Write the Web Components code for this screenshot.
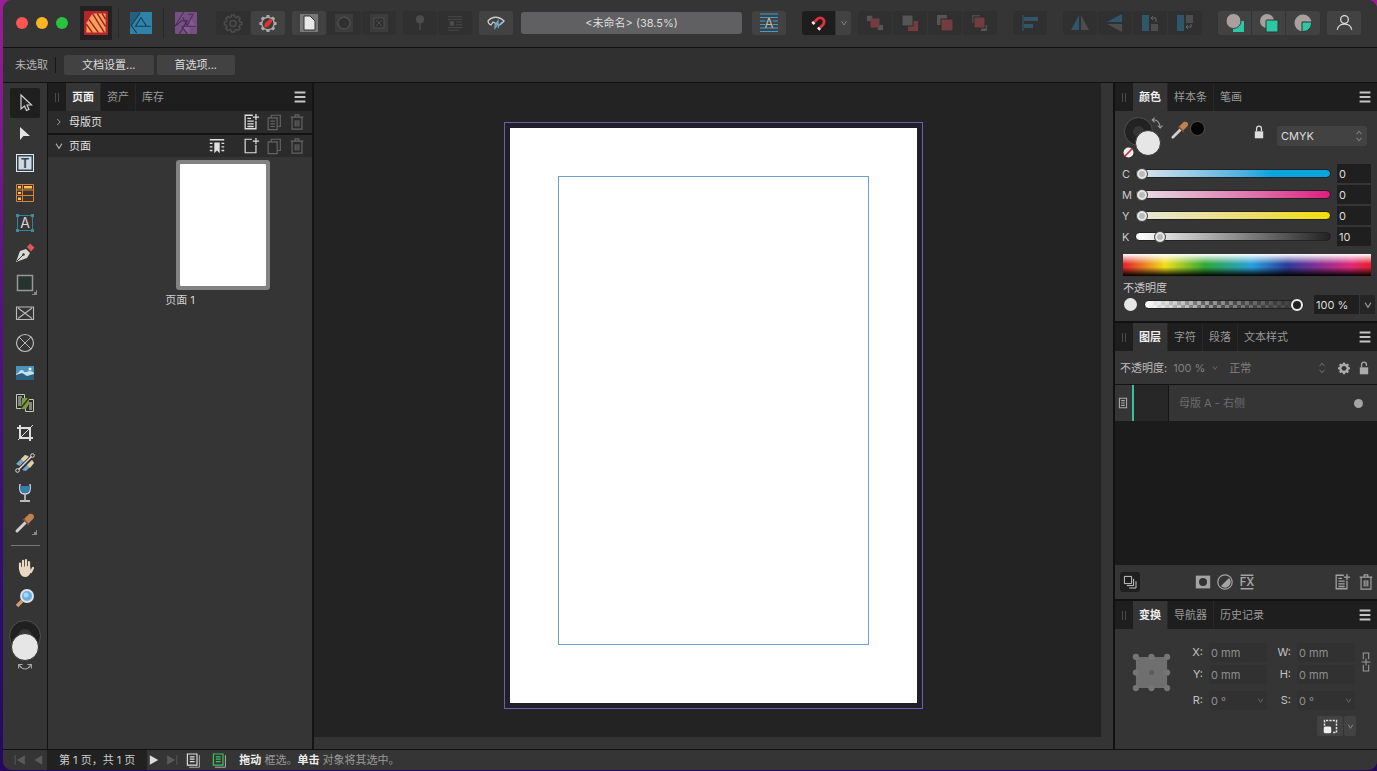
<!DOCTYPE html>
<html lang="zh-CN">
<head>
<meta charset="utf-8">
<title>未命名</title>
<style>
  html, body {
    height: 100%;
    margin: 0;
  }
  body {
    display: flex;
    box-sizing: border-box;
    padding: 0 0 1px 3px;
    overflow: hidden;
    background: linear-gradient(#9a1f96, #5c1384 35%, #2b0d6e 80%, #26095c);
    color: #c8c8c8;
    font: 11px/16px Inter, "Noto Sans CJK SC", sans-serif;
  }
</style>
</head>
<body>
<app-window>
  <tool-bar></tool-bar>
  <context-bar></context-bar>
  <main-area>
    <tool-strip></tool-strip>
    <pages-panel></pages-panel>
    <page-canvas></page-canvas>
    <side-panels>
      <color-panel></color-panel>
      <layers-panel></layers-panel>
      <transform-panel></transform-panel>
    </side-panels>
  </main-area>
  <status-bar></status-bar>
</app-window>

<script>
// all icons are drawn on a 20x20 grid
const GEAR = '<path d="M8.6 2h2.8l.4 2 1.5.6 1.8-1.1 2 2-1.1 1.7.6 1.5 2 .5v2.6l-2 .5-.6 1.5 1.1 1.7-2 2-1.8-1.1-1.5.6-.4 2H8.6l-.4-2-1.5-.6-1.8 1.1-2-2L4 13.8l-.6-1.5-2-.5V9.2l2-.5L4 7.2 2.9 5.5l2-2 1.8 1.1L8.2 4z"';
const LINES = '<path d="M1 2h18M1 4h18M1 6h18M1 8h18M1 10h18M1 12h18M1 14h18M1 16h18M1 18h18" stroke="currentColor" stroke-width=".9"/>';

const ICONS = {
  publisher: '<rect width="20" height="20" rx="1" fill="#b4242a"/><path d="M7 2h11v16H2v-8z" fill="#ff9c5c"/><path d="M7 2l10 16M4 7l8 11M2 11l5 7M11 2l7 11M15 2l3 5" stroke="#8a2b22" stroke-width="1.2"/>',
  designer: '<rect width="20" height="20" rx="1" fill="#2b7295"/><path d="M10 0 0 16v4h20V0z" fill="#3083a8"/><path d="M9 1 1 12l5 7M10 5 5 13h14M10 5l5 8M5 13h14" stroke="#163c50" fill="none"/><path d="M0 0h9L0 13z" fill="#27607e"/>',
  photo: '<rect width="20" height="20" rx="1" fill="#755083"/><path d="M7 0 0 12v3l9-15zM14 5l5 8H6l7 7" fill="#835b91"/><path d="M0 13 8 0M7 5l4 7 5-9M4 20l7-12h-5l-6 5M7 13h12M6 13l5 7M12 2h5" stroke="#472c53" fill="none"/>',
  gear: GEAR + ' fill="none" stroke="currentColor" stroke-width="1.5"/><circle cx="10" cy="10.5" r="3" fill="none" stroke="currentColor" stroke-width="1.5"/>',
  gearRed: GEAR + ' fill="#aaa"/><circle cx="10" cy="10.5" r="5.5" fill="#3a3a3a"/><path d="M6 14.5 7 10l5-4 2.5.5-.5 2.500-4 5z" fill="#d33"/>',
  wrapPage: LINES + '<path d="M5 3h6l5 5v9H5z" fill="#e8e8e8" stroke="#333"/>',
  wrapCircle: LINES + '<circle cx="10" cy="10" r="6" fill="#303030" stroke="currentColor" stroke-width="1.5"/>',
  wrapBox: LINES + '<rect x="5" y="5" width="10" height="10" fill="#303030" stroke="currentColor"/><path d="M7 7l6 6M13 7l-6 6" stroke="currentColor"/>',
  pin: '<circle cx="10" cy="6" r="4.5" fill="currentColor"/><path d="M10 9v9" stroke="currentColor" stroke-width="1.5"/>',
  inline: '<path d="M2 3h16M2 6h16M11 9h7M11 12h7M2 15h16M2 18h12" stroke="currentColor"/><rect x="4" y="8" width="5" height="5" fill="currentColor"/>',
  preview: '<path d="M5 12C3 11 2 9 2 8c4-5 11-5 16 0-2 2-3 4-5 4L7 9z" fill="none" stroke="#ccc" stroke-width="1.3"/><path d="M9 15v-3l3-4v3zM12 15l1-3 3-3" stroke="#6da6c4" fill="none" stroke-width="1.3"/>',
  baseline: '<path d="M1 1h18M1 4.500h18M1 8h18M1 11.5h18M1 15h18M1 18.5h18" stroke="#3c9fd0" stroke-width="1.2"/><path d="M6 5h8v9H6z" fill="#424242" opacity=".7"/><text x="10" y="15" font-size="13" text-anchor="middle" fill="#bbb">A</text>',
  magnet: '<g transform="rotate(45 10 10)"><path d="M5 15V8a5 5 0 0 1 10 0v7" fill="none" stroke="#e0303a" stroke-width="3.5"/><path d="M3 15h4M13 15h4" stroke="#eee" stroke-width="3"/></g>',
  toBack: '<rect x="1" y="2" width="6" height="6" fill="#555"/><rect x="13" y="12" width="6" height="6" fill="#555"/><rect x="5" y="5" width="10" height="10" fill="#733c3e"/>',
  back: '<rect x="8" y="8" width="10" height="10" fill="#733c3e"/><rect x="2" y="2" width="11" height="11" fill="#555" stroke="#2d2d2d"/>',
  forward: '<rect x="2" y="2" width="10" height="10" fill="#555"/><rect x="6" y="6" width="12" height="12" fill="#733c3e" stroke="#2d2d2d"/>',
  toFront: '<rect x="2" y="2" width="8" height="8" fill="#4a4a4a"/><rect x="11" y="12" width="6" height="6" fill="#555"/><rect x="4" y="4" width="11" height="11" fill="#733c3e" stroke="#2d2d2d"/>',
  align: '<path d="M3 2v16" stroke="#3a5a6c"/><path d="M4 4h14v4H4zM4 11h9v4H4z" fill="#30566c"/>',
  flipH: '<path d="M9 2v15H1z" fill="#30566c"/><path d="M11 2v15h8z" fill="#4d4d4d"/>',
  flipV: '<path d="M17 1v8H2z" fill="#30566c"/><path d="M17 19v-8H2z" fill="#4d4d4d"/>',
  rotL: '<path d="M2 2h7v16H2z" fill="#30566c"/><path d="M11 11h7v7h-7z" fill="#4d4d4d"/><path d="M11 5h5v4M13 3l-2 2 2 2" fill="none" stroke="#666"/>',
  rotR: '<path d="M2 2h7v16H2z" fill="#30566c"/><path d="M11 2h7v8h-7z" fill="#4d4d4d"/><path d="M11 14h5v-3M13 12l-2 2 2 2" fill="none" stroke="#666"/>',
  insBehind: '<path d="M8 8h11v11H8z" fill="#2cc8a4"/><circle cx="8.5" cy="8" r="7.5" fill="#a9a0a0" stroke="#424242"/>',
  insTop: '<circle cx="8" cy="8" r="7" fill="#a9a0a0"/><rect x="7" y="7" width="12" height="12" rx="1" fill="#2cc8a4" stroke="#333"/>',
  insIn: '<circle cx="10" cy="10" r="8.5" fill="#a9a0a0"/><path d="M9 9h9.500a8.500 8.500 0 0 1-9.500 9.500z" fill="#2cc8a4" stroke="#333"/>',
  account: '<circle cx="10" cy="6.5" r="4.5" fill="none" stroke="#ddd" stroke-width="1.5"/><path d="M1.500 18.500c1-9 16-9 17 0" fill="none" stroke="#ddd" stroke-width="1.5"/>',

  move: '<path d="M6 2v14l3.500-3 2 4.500 2.500-1-2-4.500h4.500z" fill="#222" stroke="#ccc" stroke-width="1.2"/>',
  node: '<path d="M5 4v13l3.500-4H15z" fill="#e4e4e4"/>',
  frameText: '<rect x="1.5" y="1.5" width="17" height="17" fill="#33424c" stroke="#dfe8ec"/><rect x="3.5" y="3.5" width="13" height="13" fill="#cfdbe1"/><text x="10" y="15" font-size="13" font-weight="600" text-anchor="middle" fill="#37444d">T</text>',
  table: '<path d="M1.500 1.500h17v17h-17zM7.500 2v16M2 7h16M2 12.500h16" fill="none" stroke="#e8802a"/><path d="M3 3h3v2.500H3zM9 3h8v2.500H9zM3 9h3v2H3zM3 14.500h3V17H3z" fill="#ffc24c"/>',
  artText: '<rect x="2.5" y="2.5" width="15" height="15" fill="none" stroke="#3c8296"/><path d="M1 1h3v3H1zM16 1h3v3h-3zM1 16h3v3H1zM16 16h3v3h-3z" fill="#3f8ca2"/><text x="10" y="15" font-size="14" text-anchor="middle" fill="#d6d6d6">A</text>',
  pen: '<path d="M1 19 5 8l6-2 4 4-3 5z" fill="#d9dad4"/><path d="M2 18l6-6" stroke="#333"/><circle cx="8.500" cy="11.500" r="1.200" fill="#333"/><path d="M12 4l3-3.500 4.500 4L16 8.500z" fill="#e25557"/>',
  rect: '<rect x="2.5" y="2.5" width="15" height="15" fill="#26332f" stroke="#989898" stroke-width="1.5"/>',
  pictRect: '<path d="M1.500 4h17v12.500h-17zM3 5l14 10.500M17 5 3 15.500" fill="none" stroke="#bbb" stroke-width="1.1"/>',
  pictOval: '<circle cx="10" cy="10" r="8.5" fill="none" stroke="#bbb" stroke-width="1.2"/><path d="M4 4l12 12M16 4 4 16" stroke="#bbb"/>',
  image: '<path d="M1 3h18v14H1z" fill="#4b93bd"/><path d="M1 12c0-2 2-1 3-3s4-3 5 0h3c2-2 5-1 7 1v3H1z" fill="#c5e1ec"/><path d="M1 12l6-2 5 3 7-2v6H1z" fill="#2c5e82"/><circle cx="15" cy="6" r="1.500" fill="#e8f4fa"/>',
  merge: '<path d="M1.500 1.500h8v14h-8zM10.500 6.500h8v12h-8z" fill="#2b2b2b" stroke="#c4ccb4"/><path d="M3 4h4M3 6h3M3 8h3M3 10h3M3 12h3M13 10h4M14 12h3M14 14h3M14 16h3" stroke="#ddd"/><path d="M7 5h7v6l-3 5H6z" fill="#7c9a44"/><path d="M6 15l8-10" stroke="#2c3a18" stroke-width="1.500"/>',
  crop: '<path d="M5 2v13h13M2 5h13v13" fill="none" stroke="#ddd" stroke-width="2"/><path d="M3 17 18 2" stroke="#ddd"/>',
  gradient: '<path d="M1 11 10 2l4 1L5 13z" fill="#79a7c5"/><path d="M6 6l4-4 4 2-5 5z" fill="#e6ce9c"/><path d="M7 17 17 7l2 3-8 8z" fill="#79a7c5"/><path d="M12 12l5-5 2 3-4 5z" fill="#e6ce9c"/><path d="M3 17 17 3" stroke="#333" stroke-width="3"/><path d="M3 17 17 3" stroke="#ddd" stroke-width="1.500"/><circle cx="2.500" cy="17.500" r="1.800" fill="#333" stroke="#ddd"/><circle cx="17.500" cy="2.500" r="1.800" fill="#333" stroke="#ddd"/>',
  glass: '<path d="M5 1c-1 6 0 10 5 10s6-4 5-10M10 11v6" fill="none" stroke="#c6d2d8" stroke-width="1.500"/><path d="M5 3h10c0 6-2 7-5 7S5 9 5 3z" fill="#357fab"/><path d="M5 18h10" stroke="#ccc" stroke-width="1.800"/>',
  picker: '<path d="M2 18 12 8" stroke="#d0d0d0" stroke-width="3" stroke-linecap="round"/><path d="M9 6l5-5c5-1 6 3 4 5l-5 5z" fill="#c28150"/><path d="M8 6l6 6" stroke="#7b5136" stroke-width="1.500"/>',
  hand: '<path d="M5 11V5.500M8 10V2.800M11 10V2M14 10V4M16 14l2-4" stroke="#ead8c2" stroke-width="2.200" stroke-linecap="round"/><path d="M4 9l11-1 1 5c-1 4-3 6-6 6s-6-3-6-10z" fill="#ead8c2"/>',
  zoom: '<path d="M2 18l5-5" stroke="#d59a6c" stroke-width="3.500"/><circle cx="12" cy="8" r="6" fill="#6aaee6" stroke="#e3e3e3" stroke-width="2"/><circle cx="11" cy="7" r="2.500" fill="#a9d6f5"/>',

  burger: '<path d="M4 5h12M4 10h12M4 15h12" stroke="#c4c4c4" stroke-width="2"/>',
  right: '<path d="M7 5l5 5-5 5" fill="none" stroke="currentColor" stroke-width="1.500"/>',
  down: '<path d="M5 6l5 8 5-8" fill="none" stroke="currentColor" stroke-width="1.800"/>',
  updown: '<path d="M6 7l4-5 4 5M6 13l4 5 4-5" fill="none" stroke="currentColor" stroke-width="1.500"/>',
  addMaster: '<path d="M12 2.500H3.500v15h12V9M15.500 1v7M12 4.500h7M6 9h7M6 12h7M6 15h7M6 6h4" fill="none" stroke="currentColor" stroke-width="1.400"/>',
  addPage: '<path d="M11 2.500H3.500v15h12V9M15.500 1v7M12 4.500h7" fill="none" stroke="currentColor" stroke-width="1.300"/>',
  copyLines: '<path d="M3.500 5.500h10v13h-10zM7 5V2.500h10V15h-3M6 9h5M6 12h5M6 15h5" fill="none" stroke="currentColor" stroke-width="1.300"/>',
  copy: '<path d="M3.500 5.500h10v13h-10zM7 5V2.500h10V15h-3" fill="none" stroke="currentColor" stroke-width="1.300"/>',
  trash: '<path d="M3 4.500h14M8 4V2h4v2M4.500 5v13h11V5M8 8v7M10 8v7M12 8v7" fill="none" stroke="currentColor" stroke-width="1.300"/>',
  section: '<path d="M2 3h16M2 7h3M15 7h3M2 11h3M15 11h3M2 15h3M15 15h3" stroke="currentColor" stroke-width="1.500"/><path d="M7 6h6v12l-3-3-3 3z" fill="currentColor"/>',
  swap: '<path d="M4 5c6-1 9 3 10 9M7 2 4 5l3 3M11 12l3 3 3-3" fill="none" stroke="currentColor" stroke-width="1.300"/>',
  swapFlat: '<path d="M3 8c4 6 10 6 14 0M2 12V7h5M18 12V7h-5" fill="none" stroke="currentColor" stroke-width="1.300"/>',
  none: '<circle cx="10" cy="10" r="9" fill="#eee"/><path d="M3 17 17 3" stroke="#cc3545" stroke-width="3"/>',
  lock: '<path d="M4 9h12v10H4z" fill="currentColor"/><path d="M6.500 9V5a3.500 3.500 0 0 1 7 0v4" fill="none" stroke="currentColor" stroke-width="1.800"/>',
  unlock: '<path d="M4 9h12v10H4z" fill="currentColor"/><path d="M6.500 9V5a3.500 3.500 0 0 1 7 0v2" fill="none" stroke="currentColor" stroke-width="1.800"/>',
  cog: GEAR + ' fill="currentColor"/><circle cx="10" cy="10.5" r="3.5" fill="#333"/>',
  sheet: '<path d="M4 2h12v16H4zM7 6h6M7 10h6M7 14h6" fill="none" stroke="currentColor" stroke-width="1.800"/>',
  stack: '<path d="M3 3h9v9H3zM14.500 6v8.500H6M17.500 9v8.500H9" fill="none" stroke="currentColor" stroke-width="1.200"/>',
  mask: '<path d="M1 2h18v16H1z" fill="currentColor"/><circle cx="10" cy="10" r="5" fill="#333"/>',
  adjust: '<circle cx="10" cy="10" r="9" fill="none" stroke="currentColor" stroke-width="1.500"/><path d="M15 5A7 7 0 0 1 5 15z" fill="currentColor"/>',
  fx: '<path d="M2 1.500h16M2 18.500h16" stroke="currentColor" stroke-width="1.800"/><text x="10" y="15" font-size="14" font-weight="600" text-anchor="middle" fill="currentColor">FX</text>',
  link: '<path d="M7 7V0h6v7M7 13v7h6v-7M10 6v8M5 10h10" fill="none" stroke="currentColor" stroke-width="1.200"/>',
  anchors: '<path d="M2 2h16v16H2z" fill="#6f6f6f"/><g fill="#757575"><circle cx="2" cy="2" r="1.600"/><circle cx="10" cy="2" r="1.600"/><circle cx="18" cy="2" r="1.600"/><circle cx="2" cy="10" r="1.600"/><circle cx="18" cy="10" r="1.600"/><circle cx="2" cy="18" r="1.600"/><circle cx="10" cy="18" r="1.600"/><circle cx="18" cy="18" r="1.600"/></g><circle cx="10" cy="10" r="1.300" fill="#5c5c5c"/>',
  bounds: '<path d="M2 9V2h16v16h-6" fill="none" stroke="#ddd" stroke-width="2" stroke-dasharray="3 1.500"/><rect x="1" y="10" width="10" height="9" rx="2" fill="#eee"/>',
  first: '<path d="M2 2v16" stroke="currentColor" stroke-width="1.500"/><path d="M18 2v16L5 10z" fill="currentColor"/>',
  prev: '<path d="M17 2v16L4 10z" fill="currentColor"/>',
  next: '<path d="M3 2v16l14-8z" fill="currentColor"/>',
  last: '<path d="M18 2v16" stroke="currentColor" stroke-width="1.500"/><path d="M2 2v16l13-8z" fill="currentColor"/>',
  sheets: '<path d="M3 2.500h12v14H3zM6 6h6M6 9h6M6 12h6" fill="none" stroke="currentColor" stroke-width="1.500"/><path d="M5 19h13V4" fill="none" stroke="#ccc"/>',
};

// rules that every shadow root starts with
const BASE = `
  :host { display: block; box-sizing: border-box; }
  *, ::before, ::after { box-sizing: border-box; }
  button, input, select {
    margin: 0; padding: 0; border: 0; background: none;
    color: inherit; font: inherit; outline: 0;
    appearance: none; border-radius: 0;
  }
  button { display: flex; align-items: center; justify-content: center; }
`;

function define(name, markup) {
  customElements.define(name, class extends HTMLElement {
    constructor() {
      super();
      let template = document.createElement('template');
      template.innerHTML = markup.replace('<style>', '<style>' + BASE);
      this.attachShadow({mode: 'open'}).appendChild(template.content.cloneNode(true));
    }
  });
}

class AppIcon extends HTMLElement {
  constructor() {
    super();
    this.attachShadow({mode: 'open'});
  }

  connectedCallback() {
    let size = this.getAttribute('size') || 20;
    this.shadowRoot.innerHTML = `
      <style>
        :host { display: block; flex: none; width: ${size}px; height: ${size}px; }
        svg { display: block; overflow: visible; font-family: Inter, sans-serif; }
      </style>
      <svg width="${size}" height="${size}" viewBox="0 0 20 20" aria-hidden="true">${ICONS[this.getAttribute('name')]}</svg>`;
  }
}
customElements.define('app-icon', AppIcon);

// row of tabs on top of a panel, names separated by commas, first one is active
class PanelTabs extends HTMLElement {
  constructor() {
    super();
    this.attachShadow({mode: 'open'});
  }

  connectedCallback() {
    let tabs = this.getAttribute('names').split(',')
      .map((n, i) => `<button role="tab" aria-selected="${i === 0}">${n}</button>`)
      .join('');
    this.shadowRoot.innerHTML = `
      <style>
        ${BASE}
        :host { display: flex; flex: none; height: 28px; background: #1e1e1e; padding-right: 3px; }
        .grip { width: 4px; height: 9px; margin: 10px 7px 0; border: solid #4a4a4a; border-width: 0 1px; }
        .tabs { display: flex; flex: 1; }
        .tabs button { padding: 0 6px; border-right: 1px solid #282828; color: #999; }
        .tabs button:last-child { border: 0; }
        .tabs [aria-selected=true] { background: #353535; color: #eee; font-weight: 600; }
      </style>
      <span class="grip"></span>
      <div class="tabs" role="tablist">${tabs}</div>
      <button aria-label="菜单"><app-icon name="burger" size="18"></app-icon></button>`;
  }
}
customElements.define('panel-tabs', PanelTabs);

define('app-window', `
  <style>
    :host {
      display: flex; flex-direction: column; flex: 1; min-width: 0;
      background: #333; border-radius: 9px; overflow: hidden;
    }
  </style>
  <slot></slot>
`);

define('main-area', `
  <style>
    :host { display: flex; flex: 1; min-height: 0; }
  </style>
  <slot></slot>
`);

define('tool-bar', `
  <style>
    :host {
      display: flex; align-items: center; height: 48px; padding: 0 16px 2px 13px;
      background: #353535; border-bottom: 1px solid #111;
    }
    .lights { display: flex; gap: 8px; margin-right: 12px; }
    .lights button { width: 12px; height: 12px; border-radius: 50%; background: #fc5753; }
    .lights button:nth-child(2) { background: #fdb424; }
    .lights button:nth-child(3) { background: #29c33f; }
    .personas { display: flex; align-items: center; margin-right: 14px; }
    .personas button { width: 32px; height: 34px; }
    .personas button:first-child { background: #222; }
    .personas i { width: 1px; height: 30px; margin: 0 6px; background: #292929; }
    .group { display: flex; gap: 1px; }
    .group + .group { margin-left: 7px; }
    .group button {
      width: 34px; height: 24px; border-radius: 3px;
      background: #424242; color: #aaa;
    }
    .group button:disabled { background: #303030; color: #4c4c4c; }
    .group.join { gap: 0; }
    .join button { border-radius: 0; border-right: 1px solid #333; }
    .join button:first-child { border-radius: 3px 0 0 3px; }
    .join button:last-child { border-radius: 0 3px 3px 0; border: 0; }
    .group.wide { margin-left: 16px; }
    .group .on { background: #1d1d1d; }
    .group .drop { width: 15px; color: #888; }
    .group .bright { color: #bbb; }
    .title {
      flex: 1; margin: 0 10px 0 8px; height: 22px; border-radius: 3px; min-width: 0;
      background: #606062; color: #ddd; line-height: 22px; text-align: center;
    }
  </style>
  <div class="lights">
    <button aria-label="关闭"></button><button aria-label="最小化"></button><button aria-label="缩放"></button>
  </div>
  <div class="personas">
    <button aria-label="Publisher"><app-icon name="publisher" size="24"></app-icon></button><i></i>
    <button aria-label="Designer"><app-icon name="designer" size="22"></app-icon></button><i></i>
    <button aria-label="Photo"><app-icon name="photo" size="22"></app-icon></button>
  </div>
  <div class="group">
    <button disabled aria-label="预检"><app-icon name="gear"></app-icon></button>
    <button aria-label="预检状态"><app-icon name="gearRed"></app-icon></button>
  </div>
  <div class="group">
    <button class="bright" aria-label="文本绕排"><app-icon name="wrapPage"></app-icon></button>
    <button disabled aria-label="编辑绕排"><app-icon name="wrapCircle"></app-icon></button>
    <button disabled aria-label="绕排框"><app-icon name="wrapBox"></app-icon></button>
  </div>
  <div class="group">
    <button disabled aria-label="固定"><app-icon name="pin" size="18"></app-icon></button>
    <button disabled aria-label="内联"><app-icon name="inline" size="18"></app-icon></button>
  </div>
  <div class="group">
    <button aria-label="预览"><app-icon name="preview"></app-icon></button>
  </div>
  <div class="title">&lt;未命名&gt; (38.5%)</div>
  <div class="group">
    <button aria-label="基线网格"><app-icon name="baseline"></app-icon></button>
  </div>
  <div class="group join wide">
    <button class="on" aria-label="吸附"><app-icon name="magnet" size="16"></app-icon></button>
    <button class="drop" aria-label="吸附选项"><app-icon name="down" size="10"></app-icon></button>
  </div>
  <div class="group">
    <button disabled aria-label="置于底层"><app-icon name="toBack" size="18"></app-icon></button>
    <button disabled aria-label="后移"><app-icon name="back"></app-icon></button>
    <button disabled aria-label="前移"><app-icon name="forward"></app-icon></button>
    <button disabled aria-label="置于顶层"><app-icon name="toFront"></app-icon></button>
  </div>
  <div class="group wide">
    <button disabled aria-label="对齐"><app-icon name="align"></app-icon></button>
  </div>
  <div class="group wide">
    <button disabled aria-label="水平翻转"><app-icon name="flipH"></app-icon></button>
    <button disabled aria-label="垂直翻转"><app-icon name="flipV"></app-icon></button>
    <button disabled aria-label="逆时针旋转"><app-icon name="rotL"></app-icon></button>
    <button disabled aria-label="顺时针旋转"><app-icon name="rotR"></app-icon></button>
  </div>
  <div class="group join wide">
    <button aria-label="插入后面"><app-icon name="insBehind"></app-icon></button>
    <button aria-label="插入顶部"><app-icon name="insTop"></app-icon></button>
    <button aria-label="插入内部"><app-icon name="insIn"></app-icon></button>
  </div>
  <div class="group">
    <button aria-label="帐户"><app-icon name="account" size="17"></app-icon></button>
  </div>
`);

define('context-bar', `
  <style>
    :host {
      display: flex; align-items: center; gap: 3px; height: 35px; padding: 0 12px;
      background: #303030; border-bottom: 1px solid #111;
    }
    span { padding-right: 7px; margin-right: 5px; border-right: 1px solid #161616; color: #b4b4b4; }
    button { height: 20px; padding: 0 18px; border-radius: 2px; background: #424242; color: #ddd; }
  </style>
  <span>未选取</span>
  <button>文档设置...</button>
  <button>首选项...</button>
`);

define('tool-strip', `
  <style>
    :host {
      display: flex; flex-direction: column; align-items: center; flex: none;
      width: 45px; padding-top: 5px; border-right: 1px solid #111; background: #353535;
    }
    button { width: 30px; height: 30px; flex: none; }
    .on { background: #1f1f1f; border-radius: 2px; }
    .more { background: linear-gradient(135deg, transparent 50%, #888 50%) right 3px bottom 3px / 5px 5px no-repeat; }
    hr { width: 29px; margin: 7px 0; border: 0; border-top: 1px solid #777; }
    .swatch { position: relative; width: 30px; height: 52px; margin-top: 8px; color: #aaa; }
    .stroke, .fill { position: absolute; border-radius: 50%; }
    .stroke { top: 0; left: 0; width: 30px; height: 30px; border: 8px solid #202020; outline: 1px solid #4c4c4c; }
    .fill { top: 12px; left: 1px; width: 28px; height: 28px; background: #e6e6e6; border: 1px solid #333; }
    .swatch app-icon { position: absolute; left: 7px; top: 38px; }
  </style>
  <button class="on" aria-label="移动"><app-icon name="move"></app-icon></button>
  <button aria-label="节点"><app-icon name="node"></app-icon></button>
  <button aria-label="框架文本"><app-icon name="frameText"></app-icon></button>
  <button aria-label="表格"><app-icon name="table"></app-icon></button>
  <button aria-label="美术字"><app-icon name="artText"></app-icon></button>
  <button aria-label="钢笔"><app-icon name="pen"></app-icon></button>
  <button class="more" aria-label="矩形"><app-icon name="rect"></app-icon></button>
  <button aria-label="矩形图框"><app-icon name="pictRect"></app-icon></button>
  <button aria-label="椭圆图框"><app-icon name="pictOval"></app-icon></button>
  <button aria-label="置入图像"><app-icon name="image"></app-icon></button>
  <button aria-label="数据合并"><app-icon name="merge"></app-icon></button>
  <button aria-label="裁剪"><app-icon name="crop"></app-icon></button>
  <button aria-label="填充"><app-icon name="gradient"></app-icon></button>
  <button aria-label="透明度"><app-icon name="glass"></app-icon></button>
  <button class="more" aria-label="颜色选择器"><app-icon name="picker"></app-icon></button>
  <hr>
  <button aria-label="视图"><app-icon name="hand"></app-icon></button>
  <button aria-label="缩放"><app-icon name="zoom"></app-icon></button>
  <div class="swatch">
    <app-icon name="swapFlat" size="16"></app-icon>
    <span class="stroke"></span><span class="fill"></span>
  </div>
`);

define('pages-panel', `
  <style>
    :host {
      display: flex; flex-direction: column; flex: none; width: 266px;
      border-right: 2px solid #141414; background: #353535;
    }
    .row {
      display: flex; align-items: center; height: 22px; gap: 5px;
      padding: 0 6px 0 5px; background: #2b2b2b; color: #e0e0e0;
    }
    .row + .row { height: 24px; border-top: 2px solid #141414; }
    .row button:disabled { color: #646464; }
    .name { flex: 1; gap: 4px; justify-content: flex-start; }
    .name app-icon { color: #aaa; }
    .section { margin-right: 11px; }
    .spread { display: grid; grid-template-columns: 86px 86px; justify-content: center; margin-top: 7px; }
    .thumb { grid-column: 2; height: 122px; background: #fff; box-shadow: 0 0 0 4px #838383; border-radius: 1px; }
    p { margin: 6px 0 0; text-align: center; color: #d0d0d0; }
  </style>
  <panel-tabs names="页面,资产,库存"></panel-tabs>
  <div class="row">
    <button class="name"><app-icon name="right" size="12"></app-icon>母版页</button>
    <button aria-label="添加母版"><app-icon name="addMaster" size="18"></app-icon></button>
    <button disabled aria-label="复制母版"><app-icon name="copyLines" size="18"></app-icon></button>
    <button disabled aria-label="删除母版"><app-icon name="trash" size="18"></app-icon></button>
  </div>
  <div class="row">
    <button class="name"><app-icon name="down" size="12"></app-icon>页面</button>
    <button class="section" aria-label="章节"><app-icon name="section" size="18"></app-icon></button>
    <button aria-label="添加页面"><app-icon name="addPage" size="18"></app-icon></button>
    <button disabled aria-label="复制页面"><app-icon name="copy" size="18"></app-icon></button>
    <button disabled aria-label="删除页面"><app-icon name="trash" size="18"></app-icon></button>
  </div>
  <div class="spread"><div class="thumb"></div></div>
  <p>页面 1</p>
`);

define('page-canvas', `
  <style>
    :host {
      display: grid; flex: 1; min-width: 0; place-items: center;
      padding: 10px 0 0 12px; background: #232323;
      border: solid #343434; border-width: 0 12px 12px 0;
    }
    .bleed { width: 419px; height: 587px; padding: 5px; border: 1px solid #6a62a8; background: #211f2a; }
    .page { height: 100%; padding: 48px 48px 58px; background: #fff; }
    .margin { height: 100%; border: 1px solid #6fa0d0; }
  </style>
  <div class="bleed"><div class="page"><div class="margin"></div></div></div>
`);

define('side-panels', `
  <style>
    :host {
      display: flex; flex-direction: column; flex: none; width: 264px; gap: 2px;
      border-left: 2px solid #111; background: #111;
    }
    ::slotted(*) { background: #353535; }
  </style>
  <slot></slot>
`);

define('color-panel', `
  <style>
    .top { display: flex; align-items: center; height: 49px; padding: 0 10px 0 8px; }
    .wells { position: relative; width: 40px; height: 40px; color: #999; }
    .stroke, .fill { position: absolute; border-radius: 50%; }
    .stroke { left: 2px; top: 2px; width: 27px; height: 27px; border: 8px solid #222; outline: 1px solid #4c4c4c; }
    .fill { left: 12px; top: 14px; width: 26px; height: 26px; background: #e6e6e6; border: 1px solid #333; }
    .swap { position: absolute; left: 26px; top: 0; }
    .none { position: absolute; left: 0; top: 31px; }
    .picker { margin: -12px 0 0 8px; }
    .picked { width: 15px; height: 15px; margin: -14px 0 0 1px; border-radius: 50%; background: #050505; border: 1px solid #505050; }
    .lock { margin: -8px 11px 0 auto; color: #ddd; }
    label.mode { position: relative; display: flex; align-items: center; color: #999; }
    .mode app-icon { position: absolute; right: 2px; }
    select { width: 90px; height: 20px; padding: 0 4px; border-radius: 2px; background: #424242; color: #ddd; }
    .channels { display: grid; grid-template-columns: 13px 1fr 34px; row-gap: 2px; align-items: center; padding: 4px 6px 0 7px; }
    input[type=text] { height: 19px; padding: 0 2px; background: #1f1f1f; color: #ddd; min-width: 0; }
    .channels input[type=text] { width: 34px; }
    input[type=range] { height: 9px; border-radius: 5px; border: 1px solid #222; background: var(--track); }
    .channels input[type=range] { margin-right: 6px; width: auto; min-width: 0; }
    input[type=range]::-webkit-slider-thumb {
      appearance: none; width: 12px; height: 12px; border-radius: 50%;
      background: #bbb; border: 1px solid #444; box-shadow: inset 0 0 0 2px #e8e8e8;
    }
    .spectrum {
      height: 22px; margin: 8px 6px 0 8px;
      background: linear-gradient(#fff, #fff0 45%, #0000 60%, #000),
        linear-gradient(90deg, #e3202c, #f0e01c 17%, #2fa836 33%, #28a0dc 52%, #2b3c9c 66%, #8f2f90 80%, #e02a78 92%, #e3202c);
    }
    .caption { padding: 5px 8px 0; line-height: 14px; }
    .opacity { display: flex; align-items: center; padding: 0 2px 7px 9px; }
    .dot { width: 13px; height: 13px; border-radius: 50%; background: #e6e6e6; }
    .opacity input[type=range] {
      flex: 1; margin: 0 10px 0 7px; min-width: 0;
      background: linear-gradient(90deg, #fff, #9990 40%, #353535),
        repeating-conic-gradient(#999 0 25%, #555 0 50%) 0 0 / 8px 8px;
    }
    .opacity input[type=range]::-webkit-slider-thumb { background: #222; border: 2px solid #eee; box-shadow: none; }
    .opacity input[type=text] { width: 45px; }
    .opacity button { width: 15px; height: 19px; margin-left: 1px; background: #252525; color: #999; }
  </style>
  <panel-tabs names="颜色,样本条,笔画"></panel-tabs>
  <div class="top">
    <div class="wells">
      <span class="stroke"></span><span class="fill"></span>
      <app-icon class="swap" name="swap" size="16"></app-icon>
      <app-icon class="none" name="none" size="11"></app-icon>
    </div>
    <app-icon class="picker" name="picker" size="18"></app-icon>
    <span class="picked"></span>
    <app-icon class="lock" name="lock" size="14"></app-icon>
    <label class="mode"><select aria-label="颜色模式"><option>CMYK</option></select><app-icon name="updown" size="12"></app-icon></label>
  </div>
  <div class="channels">
    <label for="c">C</label><input type="range" value="0" aria-label="C" style="--track: linear-gradient(90deg, #e4e6ee, #4fb1e0 55%, #08a5df 70%)"><input id="c" type="text" value="0">
    <label for="m">M</label><input type="range" value="0" aria-label="M" style="--track: linear-gradient(90deg, #e8e3e6, #dd6ba7 65%, #e01c7e)"><input id="m" type="text" value="0">
    <label for="y">Y</label><input type="range" value="0" aria-label="Y" style="--track: linear-gradient(90deg, #e8e6e0, #ecdc60 65%, #f3de06)"><input id="y" type="text" value="0">
    <label for="k">K</label><input type="range" value="10" aria-label="K" style="--track: linear-gradient(90deg, #fff, #222)"><input id="k" type="text" value="10">
  </div>
  <div class="spectrum"></div>
  <div class="caption">不透明度</div>
  <div class="opacity">
    <span class="dot"></span>
    <input type="range" value="100" aria-label="不透明度">
    <input type="text" value="100 %" aria-label="不透明度">
    <button aria-label="选项"><app-icon name="down" size="12"></app-icon></button>
  </div>
`);

define('layers-panel', `
  <style>
    :host { display: flex; flex-direction: column; flex: 1; min-height: 0; }
    .blend { display: flex; align-items: center; height: 34px; padding: 0 6px 0 5px; border-bottom: 1px solid #141414; }
    .blend span { color: #bbb; }
    .blend input { width: 38px; height: 20px; margin-left: 6px; color: #808080; }
    .blend > app-icon, .blend label app-icon { color: #777; }
    .blend label { display: flex; flex: 1; align-items: center; margin: 0 9px 0 10px; }
    select { flex: 1; height: 20px; color: #808080; }
    .blend button { color: #aaa; }
    .blend button + button { margin-left: 6px; }
    .list { flex: 1; background: #1b1b1b; }
    .layer { display: flex; align-items: center; height: 36px; padding-right: 14px; background: #353535; color: #6c6c6c; }
    .layer > app-icon { margin: 0 3px 0 2px; color: #aaa; }
    .layer i { width: 37px; height: 36px; margin-right: 10px; background: #272727; border-left: 2px solid #35c39a; border-right: 1px solid #141414; }
    .layer span { flex: 1; }
    .layer b { width: 9px; height: 9px; border-radius: 50%; background: #a4a4a4; }
    .foot { display: flex; align-items: center; gap: 6px; height: 34px; padding: 0 2px 0 5px; color: #a4a4a4; }
    .foot .on { width: 20px; height: 20px; margin-right: auto; border-radius: 3px; background: #1f1f1f; color: #ccc; }
    .foot .add { margin-left: 72px; }
  </style>
  <panel-tabs names="图层,字符,段落,文本样式"></panel-tabs>
  <div class="blend">
    <span>不透明度:</span>
    <input type="text" value="100 %" aria-label="不透明度">
    <app-icon name="down" size="8"></app-icon>
    <label><select aria-label="混合模式"><option>正常</option></select><app-icon name="updown" size="12"></app-icon></label>
    <button aria-label="混合选项"><app-icon name="cog" size="14"></app-icon></button>
    <button aria-label="锁定"><app-icon name="unlock" size="14"></app-icon></button>
  </div>
  <div class="list">
    <div class="layer"><app-icon name="sheet" size="12"></app-icon><i></i><span>母版 A - 右侧</span><b></b></div>
  </div>
  <div class="foot">
    <button class="on" aria-label="图层"><app-icon name="stack" size="16"></app-icon></button>
    <button aria-label="蒙版"><app-icon name="mask" size="16"></app-icon></button>
    <button aria-label="调整"><app-icon name="adjust" size="16"></app-icon></button>
    <button aria-label="效果"><app-icon name="fx" size="16"></app-icon></button>
    <button class="add" aria-label="添加图层"><app-icon name="addMaster" size="18"></app-icon></button>
    <button aria-label="删除图层"><app-icon name="trash" size="18"></app-icon></button>
  </div>
`);

define('transform-panel', `
  <style>
    :host { height: 148px; }
    .body { display: flex; padding: 14px 2px 0 17px; }
    .anchors { margin: 10px 17px 0 0; }
    .fields { display: grid; grid-template-columns: 15px 58px 18px 58px; gap: 3px 6px; flex: 1; }
    label { line-height: 19px; text-align: right; color: #c4c4c4; }
    .field { display: flex; align-items: center; background: #313131; height: 19px; padding: 0 2px; border-radius: 2px; color: #707070; }
    input { width: 100%; min-width: 0; color: #8f8f8f; }
    .gap { margin-top: 4px; }
    .link { margin-top: 10px; color: #999; }
    .foot { display: flex; justify-content: flex-end; gap: 1px; margin: 6px 21px 0 0; color: #999; }
    .foot button { width: 26px; height: 20px; background: #424242; border-radius: 2px; }
    .foot button + button { width: 12px; }
  </style>
  <panel-tabs names="变换,导航器,历史记录"></panel-tabs>
  <div class="body">
    <app-icon class="anchors" name="anchors" size="39"></app-icon>
    <div class="fields">
      <label for="x">X:</label><div class="field"><input id="x" value="0 mm"></div>
      <label for="w">W:</label><div class="field"><input id="w" value="0 mm"></div>
      <label for="y">Y:</label><div class="field"><input id="y" value="0 mm"></div>
      <label for="h">H:</label><div class="field"><input id="h" value="0 mm"></div>
      <label class="gap" for="r">R:</label><div class="field gap"><input id="r" value="0 °"><app-icon name="down" size="9"></app-icon></div>
      <label class="gap" for="s">S:</label><div class="field gap"><input id="s" value="0 °"><app-icon name="down" size="9"></app-icon></div>
    </div>
    <app-icon class="link" name="link" size="18"></app-icon>
  </div>
  <div class="foot">
    <button aria-label="边界框"><app-icon name="bounds" size="15"></app-icon></button>
    <button aria-label="选项"><app-icon name="down" size="9"></app-icon></button>
  </div>
`);

define('status-bar', `
  <style>
    :host {
      display: flex; align-items: center; height: 21px; padding-left: 11px;
      border-top: 1px solid #111; background: #353535; color: #9a9a9a;
    }
    button { color: #ddd; margin-right: 6px; }
    button:disabled { color: #5a5a5a; }
    output { height: 20px; line-height: 20px; padding: 0 12px; margin: 0 1px 0 -3px; background: #212121; color: #ccc; }
    .last { margin: 0; }
    .sheets { margin: 0 0 0 7px; }
    .sheets + .sheets { margin-left: 10px; color: #3cc463; }
    p { margin: 0 0 0 12px; }
    b { color: #eee; }
  </style>
  <button disabled aria-label="首页"><app-icon name="first" size="12"></app-icon></button>
  <button disabled aria-label="上一页"><app-icon name="prev" size="12"></app-icon></button>
  <output>第 1 页，共 1 页</output>
  <button aria-label="下一页"><app-icon name="next" size="12"></app-icon></button>
  <button class="last" disabled aria-label="末页"><app-icon name="last" size="12"></app-icon></button>
  <button class="sheets" aria-label="跨页"><app-icon name="sheets" size="16"></app-icon></button>
  <button class="sheets" aria-label="预检"><app-icon name="sheets" size="16"></app-icon></button>
  <p><b>拖动</b> 框选。<b>单击</b> 对象将其选中。</p>
`);
</script>
</body>
</html>
